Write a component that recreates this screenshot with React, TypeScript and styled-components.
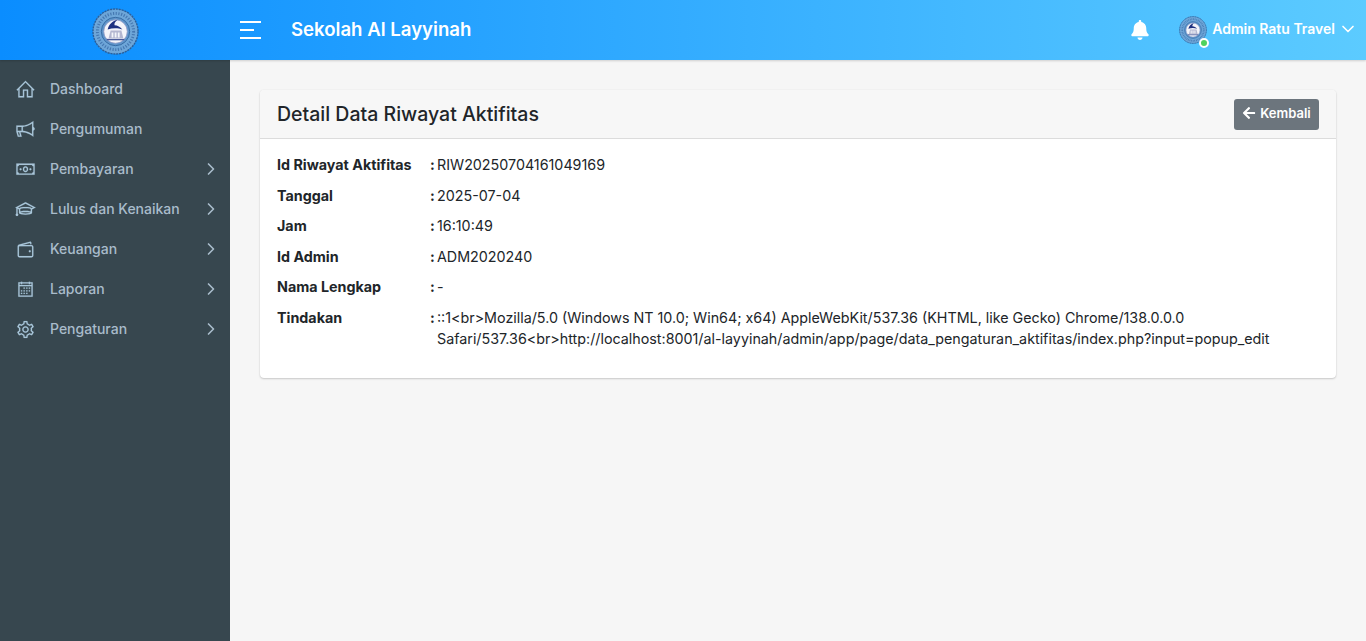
import React from "react";
import styled, { createGlobalStyle } from "styled-components";
import { FaArrowLeft, FaBell } from "react-icons/fa";
import { FiChevronDown, FiChevronRight } from "react-icons/fi";
import {
  LiaBullhornSolid,
  LiaCalendarAlt,
  LiaCogSolid,
  LiaGraduationCapSolid,
  LiaHomeSolid,
  LiaMoneyBillSolid,
  LiaWalletSolid,
} from "react-icons/lia";

const GlobalStyle = createGlobalStyle`
  html, body { margin: 0; padding: 0; height: 100%; }
  body {
    background: #f6f6f6;
    color: #212529;
    font-family: Inter, "Liberation Sans", sans-serif;
    font-size: 14px;
    overflow: hidden;
  }
`;

const Page = styled.div`
  width: 1366px;
  height: 641px;
  display: flex;
  flex-direction: column;
`;

const Topbar = styled.header`
  height: 60px;
  flex: none;
  display: flex;
  align-items: center;
  background: linear-gradient(90deg, #0a8dff 0%, #5ccbff 100%);
  box-shadow: 0 1px 2px rgba(0, 0, 0, 0.16);
  position: relative;
  z-index: 1;
`;

const Brand = styled.div`
  width: 230px;
  display: flex;
  justify-content: center;
  padding-top: 2px;
`;

const MenuButton = styled.div`
  width: 22px;
  margin-left: 10px;
  display: flex;
  flex-direction: column;
  gap: 6px;
`;

const MenuLine = styled.span<{ $short?: boolean }>`
  display: block;
  height: 2px;
  width: ${(p) => (p.$short ? 14 : 21)}px;
  background: #fff;
`;

const SchoolName = styled.div`
  margin-left: 29px;
  margin-top: -3px;
  color: #fff;
  font-size: 18.6px;
  font-weight: 600;
`;

const TopRight = styled.div`
  margin-left: auto;
  display: flex;
  align-items: center;
  padding-right: 8px;
  color: #fff;
`;

const BellButton = styled.div`
  display: flex;
  margin-right: 29px;
  font-size: 20px;
`;

const Avatar = styled.div`
  position: relative;
  width: 28px;
  height: 28px;
  margin-right: 5px;
`;

const StatusDot = styled.span`
  position: absolute;
  right: -2px;
  bottom: -4px;
  width: 6px;
  height: 6px;
  border-radius: 50%;
  background: #4fd25f;
  border: 2px solid #fff;
`;

const UserName = styled.div`
  font-size: 14px;
  font-weight: 600;
  margin-top: -3px;
`;

const UserCaret = styled(FiChevronDown)`
  margin-left: 3px;
  font-size: 20px;
  margin-top: -2px;
`;

const Body = styled.div`
  flex: 1;
  display: flex;
  min-height: 0;
`;

const Sidebar = styled.nav`
  width: 230px;
  flex: none;
  background: #37474f;
  padding-top: 9px;
  box-sizing: border-box;
`;

const NavItem = styled.div`
  height: 40px;
  display: flex;
  align-items: center;
  padding: 0 9px 0 16px;
  color: #a9bccb;
  font-size: 14px;
  font-weight: 500;
`;

const NavIcon = styled.span`
  width: 18px;
  display: flex;
  justify-content: center;
  font-size: 21px;
  margin-right: 16px;
  color: #a9c6da;

  svg {
    flex: none;
    stroke: currentColor;
    stroke-width: 0.2;
  }
`;

const NavLabel = styled.span`
  flex: 1;
  margin-top: -2px;
`;

const NavCaret = styled(FiChevronRight)`
  font-size: 20px;
`;

const Main = styled.main`
  flex: 1;
  padding: 30px 30px 0;
`;

const Card = styled.section`
  background: #fff;
  border-radius: 4px;
  box-shadow: 0 0 1px rgba(0, 0, 0, 0.12), 0 1px 2px rgba(0, 0, 0, 0.18);
`;

const CardHeader = styled.div`
  height: 49px;
  background: #f7f7f7;
  border-bottom: 1px solid #dcdcdc;
  border-radius: 4px 4px 0 0;
  display: flex;
  align-items: center;
  justify-content: space-between;
  padding: 0 17px;
  box-sizing: border-box;
`;

const CardTitle = styled.h1`
  margin: 0;
  font-size: 19.5px;
  font-weight: 500;
  color: #212529;
`;

const BackButton = styled.div`
  height: 31px;
  width: 85px;
  display: flex;
  align-items: center;
  justify-content: center;
  gap: 4px;
  border-radius: 3px;
  background: #6c757d;
  color: #fff;
  font-size: 13px;
  font-weight: 600;
  padding-bottom: 2px;
  box-sizing: border-box;

  svg {
    font-size: 14px;
  }
`;

const CardBody = styled.div`
  padding: 15px 17px 20px;
`;

const DetailRow = styled.div`
  display: flex;
  align-items: flex-start;
  line-height: 21px;
  margin-bottom: 9.5px;
  font-size: 14.3px;
`;

const DetailLabel = styled.div`
  width: 153px;
  flex: none;
  font-weight: 700;
  white-space: nowrap;
`;

const Colon = styled.div`
  width: 7px;
  flex: none;
  font-weight: 700;
`;

const DetailValue = styled.div`
  flex: 1;
  padding-right: 30px;
  overflow-wrap: anywhere;
`;

const Logo: React.FC<{ size: number }> = ({ size }) => (
  <svg width={size} height={size} viewBox="0 0 48 48">
    <circle cx="24" cy="24" r="23" fill="#6ea6d8" stroke="#2c5f99" strokeWidth="1.4" strokeDasharray="2.2 0.8" />
    <circle cx="24" cy="24" r="18.5" fill="none" stroke="#2f5f9c" strokeWidth="3" strokeDasharray="1.2 1.6" opacity="0.65" />
    <circle cx="24" cy="24" r="14.5" fill="#5e95cb" stroke="#2c5f99" strokeWidth="0.8" />
    <circle cx="24" cy="24" r="12" fill="#f4f5fa" stroke="#8d97c4" strokeWidth="0.8" />
    <path d="M16 22c1-5 5-9 10-10-2.400 2-3.400 3.600-3 5.600 3 .2 6 1.400 8 4.400-4-1.600-10-1.800-15 0z" fill="#1f3180" />
    <path d="M19 23h11l2 8H17z" fill="#b3b6d0" />
    <path d="M20 25h1.800v5H20zM23.200 25H25v5h-1.800zM26.400 25h1.800v5h-1.800z" fill="#f4f5fa" />
    <path d="M15 31.500h18V33H15z" fill="#4a5a9a" />
  </svg>
);

const navItems = [
  { label: "Dashboard", icon: <LiaHomeSolid /> },
  { label: "Pengumuman", icon: <LiaBullhornSolid /> },
  { label: "Pembayaran", icon: <LiaMoneyBillSolid />, sub: true },
  { label: "Lulus dan Kenaikan", icon: <LiaGraduationCapSolid />, sub: true },
  { label: "Keuangan", icon: <LiaWalletSolid />, sub: true },
  { label: "Laporan", icon: <LiaCalendarAlt />, sub: true },
  { label: "Pengaturan", icon: <LiaCogSolid />, sub: true },
];

const details = [
  { label: "Id Riwayat Aktifitas", value: "RIW20250704161049169" },
  { label: "Tanggal", value: "2025-07-04" },
  { label: "Jam", value: "16:10:49" },
  { label: "Id Admin", value: "ADM2020240" },
  { label: "Nama Lengkap", value: "-" },
  {
    label: "Tindakan",
    value:
      "::1<br>Mozilla/5.0 (Windows NT 10.0; Win64; x64) AppleWebKit/537.36 (KHTML, like Gecko) Chrome/138.0.0.0 Safari/537.36<br>http://localhost:8001/al-layyinah/admin/app/page/data_pengaturan_aktifitas/index.php?input=popup_edit",
  },
];

export default function App() {
  return (
    <Page>
      <GlobalStyle />
      <Topbar>
        <Brand>
          <Logo size={47} />
        </Brand>
        <MenuButton>
          <MenuLine />
          <MenuLine $short />
          <MenuLine />
        </MenuButton>
        <SchoolName>Sekolah Al Layyinah</SchoolName>
        <TopRight>
          <BellButton>
            <FaBell />
          </BellButton>
          <Avatar>
            <Logo size={28} />
            <StatusDot />
          </Avatar>
          <UserName>Admin Ratu Travel</UserName>
          <UserCaret />
        </TopRight>
      </Topbar>
      <Body>
        <Sidebar>
          {navItems.map((item) => (
            <NavItem key={item.label}>
              <NavIcon>{item.icon}</NavIcon>
              <NavLabel>{item.label}</NavLabel>
              {item.sub && <NavCaret />}
            </NavItem>
          ))}
        </Sidebar>
        <Main>
          <Card>
            <CardHeader>
              <CardTitle>Detail Data Riwayat Aktifitas</CardTitle>
              <BackButton>
                <FaArrowLeft />
                Kembali
              </BackButton>
            </CardHeader>
            <CardBody>
              {details.map((row) => (
                <DetailRow key={row.label}>
                  <DetailLabel>{row.label}</DetailLabel>
                  <Colon>:</Colon>
                  <DetailValue>{row.value}</DetailValue>
                </DetailRow>
              ))}
            </CardBody>
          </Card>
        </Main>
      </Body>
    </Page>
  );
}
